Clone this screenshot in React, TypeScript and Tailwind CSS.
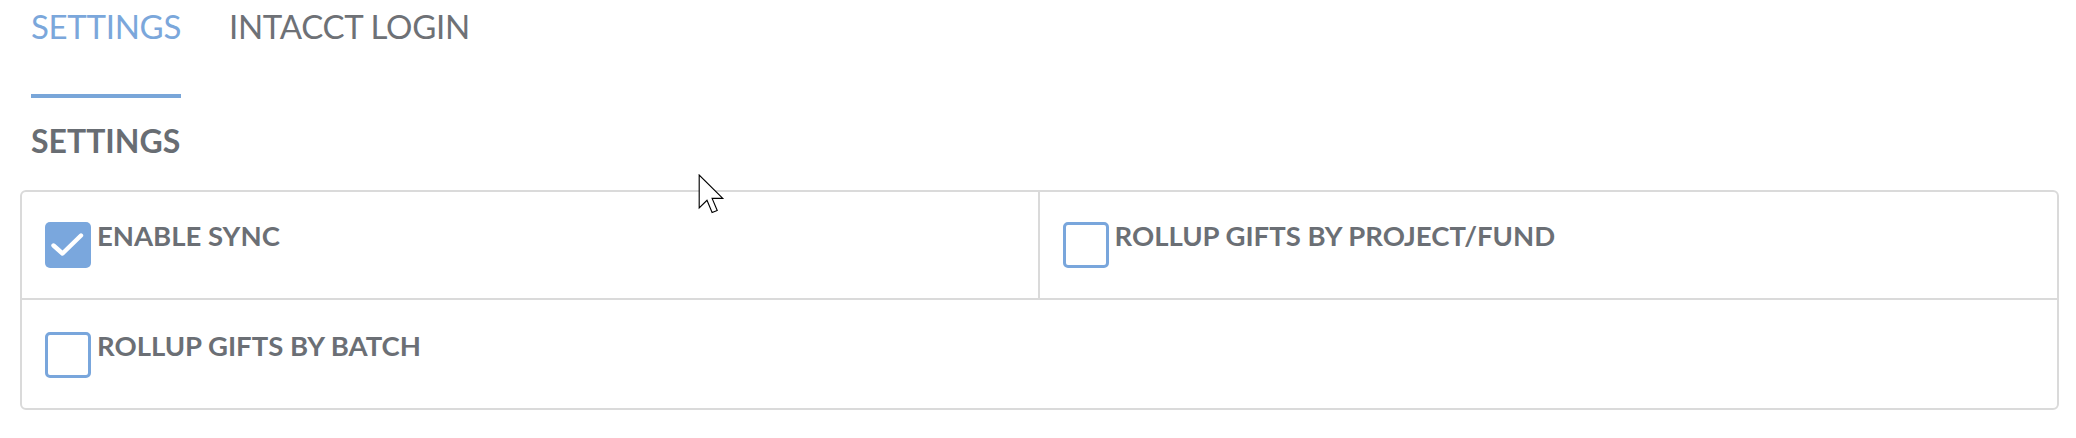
const font = { fontFamily: "Lato, 'Open Sans', sans-serif" };

function Checkbox({ checked }: { checked?: boolean }) {
  if (checked) {
    return (
      <span className="flex h-[46px] w-[46px] shrink-0 rounded-[5px] bg-[#7aa7dd]">
        <svg width="46" height="46" viewBox="0 0 46 46" fill="none">
          <path d="M8.5 23.5 L17.5 31.5 L36 13.5" stroke="white" strokeWidth="4.4" strokeLinecap="round" strokeLinejoin="round" />
        </svg>
      </span>
    );
  }
  return <span className="h-[46px] w-[46px] shrink-0 rounded-[5px] border-[3px] border-[#79a6dc] bg-white" />;
}

function Option({ label, checked }: { label: string; checked?: boolean }) {
  return (
    <label className="flex items-start gap-[6px]">
      <Checkbox checked={checked} />
      <span className="-mt-[3px] text-[27.5px] font-bold leading-[33px] text-[#6b6f75]">{label}</span>
    </label>
  );
}

export default function App() {
  return (
    <div className="relative h-[438px] w-full bg-white pl-[20px] pr-[17px]" style={font}>
      <div className="flex gap-[48px] pl-[11px]">
        <button className="border-b-4 border-[#79a6d9] pt-[6px] pb-[47px] text-[33px] leading-[41px] tracking-[-0.3px] text-[#7ba7db]">
          SETTINGS
        </button>
        <button className="border-b-4 border-transparent pt-[6px] pb-[47px] text-[33px] leading-[41px] tracking-[-0.3px] text-[#6e7176]">
          INTACCT LOGIN
        </button>
      </div>

      <h2 className="mt-[24px] pl-[11px] text-[32px] font-bold leading-[38px] text-[#686d73]">SETTINGS</h2>

      <div className="mt-[30px] rounded-[6px] border-2 border-[#dadada]">
        <div className="grid h-[108px] grid-cols-2 border-b-2 border-[#dadada]">
          <div className="border-r-2 border-[#dadada] pl-[23px] pt-[30px]">
            <Option label="ENABLE SYNC" checked />
          </div>
          <div className="pl-[23px] pt-[30px]">
            <Option label="ROLLUP GIFTS BY PROJECT/FUND" />
          </div>
        </div>
        <div className="h-[108px] pl-[23px] pt-[32px]">
          <Option label="ROLLUP GIFTS BY BATCH" />
        </div>
      </div>

      {/* mouse pointer captured in the screenshot */}
      <svg className="absolute left-[698px] top-[174px]" width="27" height="41" viewBox="0 0 13 20">
        <path
          d="M0.5 0.5 L0.5 16.5 L4.3 12.8 L6.8 18.8 L9.3 17.8 L6.8 11.9 L12 11.9 Z"
          fill="white"
          stroke="black"
          strokeWidth="0.55"
          strokeLinejoin="miter"
        />
      </svg>
    </div>
  );
}
